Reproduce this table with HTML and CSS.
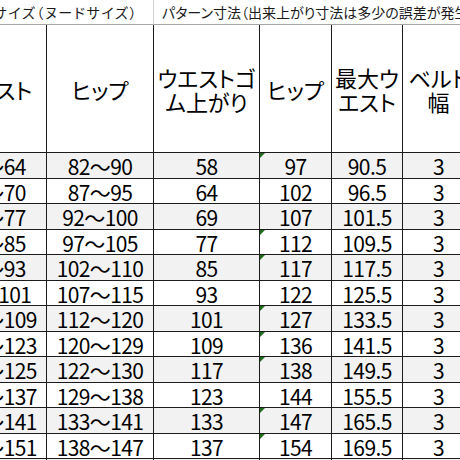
FILE: index.html
```html
<!DOCTYPE html>
<html lang="ja">
<head>
<meta charset="utf-8">
<title>サイズ表</title>
<link rel="stylesheet" href="styles.css">
</head>
<body>
<div class="sheet">
<table class="grid">
<colgroup>
<col class="w-a"><col class="w-b"><col class="w-c"><col class="w-d"><col class="w-e"><col class="w-f">
</colgroup>
<tr class="title">
<td colspan="2" class="title-left">サイズ（ヌードサイズ）</td>
<td colspan="4" class="title-right">パターン寸法（出来上がり寸法は多少の誤差が発生します）</td>
</tr>
<tr class="head">
<th>ウエスト</th><th>ヒップ</th><th>ウエストゴ<br>ム上がり</th><th>ヒップ</th><th>最大ウ<br>エスト</th><th>ベルト<br>幅</th>
</tr>
<tr class="row odd"><td>58～64</td><td>82～90</td><td>58</td><td class="flag">97</td><td>90.5</td><td>3</td></tr>
<tr class="row"><td>64～70</td><td>87～95</td><td>64</td><td>102</td><td>96.5</td><td>3</td></tr>
<tr class="row odd"><td>70～77</td><td>92～100</td><td>69</td><td>107</td><td>101.5</td><td>3</td></tr>
<tr class="row"><td>77～85</td><td>97～105</td><td>77</td><td class="flag">112</td><td>109.5</td><td>3</td></tr>
<tr class="row odd"><td>85～93</td><td>102～110</td><td>85</td><td class="flag">117</td><td>117.5</td><td>3</td></tr>
<tr class="row"><td>93～101</td><td>107～115</td><td>93</td><td>122</td><td>125.5</td><td>3</td></tr>
<tr class="row odd"><td>101～109</td><td>112～120</td><td>101</td><td class="flag">127</td><td>133.5</td><td>3</td></tr>
<tr class="row"><td>115～123</td><td>120～129</td><td>109</td><td class="flag">136</td><td>141.5</td><td>3</td></tr>
<tr class="row odd"><td>119～125</td><td>122～130</td><td>117</td><td class="flag">138</td><td>149.5</td><td>3</td></tr>
<tr class="row"><td>125～137</td><td>129～138</td><td>123</td><td>144</td><td>155.5</td><td>3</td></tr>
<tr class="row odd"><td>133～141</td><td>133～141</td><td>133</td><td class="flag">147</td><td>165.5</td><td>3</td></tr>
<tr class="row"><td>141～151</td><td>138～147</td><td>137</td><td class="flag">154</td><td>169.5</td><td>3</td></tr>
<tr class="row odd"><td>151～161</td><td>147～156</td><td>147</td><td>163</td><td>179.5</td><td>3</td></tr>
</table>
</div>
</body>
</html>
```
FILE: styles.css
```css
html, body {
  margin: 0;
  padding: 0;
  background: #ffffff;
}
.sheet {
  width: 460px;
  height: 460px;
  overflow: hidden;
}
.grid {
  margin-left: -59px;
  width: 534px;
  table-layout: fixed;
  border-collapse: separate;
  border-spacing: 0;
  font-family: "Noto Sans CJK JP", sans-serif;
  color: #000;
}
.w-a { width: 106px; }
.w-b { width: 107px; }
.w-c { width: 106px; }
.w-d { width: 72px; }
.w-e { width: 71px; }
.w-f { width: 72px; }

.grid td, .grid th {
  padding: 0;
  border-right: 1px solid #1c1c1c;
  border-bottom: 1px solid #1c1c1c;
  text-align: center;
  vertical-align: middle;
  font-weight: 400;
}
.title { height: 25px; }
.title td {
  font-size: 14px;
  line-height: 18px;
  border-right: 1px solid #d2d2d2;
  border-bottom: 1px solid #a6a6a6;
  white-space: nowrap;
  overflow: hidden;
  color: #1a1a1a;
  font-feature-settings: "palt";
}
.title-left {
  text-align: right !important;
  padding-right: 15px !important;
  letter-spacing: 1.6px;
}
.title-right {
  text-align: left !important;
  padding-left: 8px !important;
  letter-spacing: 0;
}
.head { height: 128px; }
.head th {
  font-size: 22px;
  line-height: 24px;
  font-feature-settings: "palt";
}
.row { height: 25.5px; }
.row td {
  font-size: 21px;
  line-height: 20px;
  padding-top: 2px;
  letter-spacing: -0.6px;
}
.odd td { background: #f2f2f2; }
.flag { position: relative; }
.flag::before {
  content: "";
  position: absolute;
  left: 0;
  top: 0;
  border-top: 5px solid #1e6e1e;
  border-right: 5px solid transparent;
}
```
